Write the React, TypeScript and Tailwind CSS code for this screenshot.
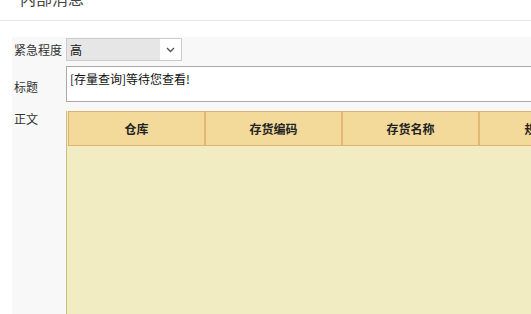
import React from 'react';

const columns = ['仓库', '存货编码', '存货名称', '规格型号'];

export default function App() {
  return (
    <div
      className="w-[531px] h-[314px] overflow-hidden bg-white flex flex-col text-[#222]"
      style={{ fontFamily: '"Noto Sans CJK SC", "Microsoft YaHei", sans-serif' }}
    >
      {/* Window title, scrolled partly out of view */}
      <div className="h-[21px] shrink-0 overflow-hidden border-b border-[#e6e6e6] pl-[20px]">
        <div className="-mt-[12px] text-[16px] leading-[20px] text-[#444]">内部消息</div>
      </div>

      <div className="flex-1 mt-[16px] ml-[12px] bg-[#f8f8f8] pt-[1px] flex flex-col min-h-0">
        {/* Urgency */}
        <div className="flex items-center h-[23px]">
          <div className="w-[54px] shrink-0 text-[12px] pl-[2px] text-[#333]">紧急程度</div>
          <div className="w-[116px] h-[23px] flex border border-[#cccccc] bg-white">
            <div className="flex-1 bg-[#e6e6e6] text-[12px] leading-[21px] pl-[3px] text-[#111]">高</div>
            <div className="w-[21px] flex items-center justify-center">
              <svg width="9" height="6" viewBox="0 0 9 6">
                <path d="M1 1 L4.5 4.5 L8 1" fill="none" stroke="#555" strokeWidth="1.4" />
              </svg>
            </div>
          </div>
        </div>

        {/* Subject */}
        <div className="flex mt-[5px] h-[36px]">
          <div className="w-[54px] shrink-0 text-[12px] pl-[2px] pt-[12px] text-[#333]">标题</div>
          <div className="flex-1 min-w-0 border-y border-l border-[#a9a9a9] bg-white text-[12px] leading-[16px] pl-[3px] pt-[4px] text-[#111]">
            [存量查询]等待您查看!
          </div>
        </div>

        {/* Body */}
        <div className="flex mt-[9px] flex-1 min-h-0">
          <div className="w-[54px] shrink-0 text-[12px] pl-[2px] -mt-[1px] text-[#333]">正文</div>
          <div className="flex-1 min-w-0 overflow-hidden border-l border-[#cbbd84] bg-[#f2ecc2] pl-[1px]">
            <div className="flex h-[35px] w-max border border-[#deb36f] border-r-0 bg-[#f3da9b]">
              {columns.map((c, i) => (
                <div
                  key={c}
                  className={`w-[137px] shrink-0 flex items-center justify-center text-[12px] font-bold text-[#222] ${
                    i < columns.length - 1 ? 'border-r-2 border-[#e2b877]' : ''
                  }`}
                >
                  {c}
                </div>
              ))}
            </div>
          </div>
        </div>
      </div>
    </div>
  );
}
